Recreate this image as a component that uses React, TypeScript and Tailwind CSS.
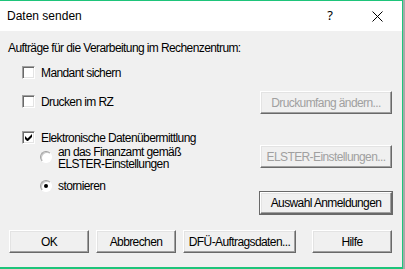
import React from 'react';

const ui = { fontFamily: '"Liberation Sans", Arial, sans-serif' };

function Check({ checked }: { checked?: boolean }) {
  return (
    <span className="relative block w-[13px] h-[13px] shrink-0 bg-white border border-t-[#a0a0a0] border-l-[#a0a0a0] border-b-white border-r-white shadow-[inset_1px_1px_0_#696969,inset_-1px_-1px_0_#e3e3e3]">
      {checked && (
        <svg className="absolute left-[2px] top-[2px]" width="7" height="7" viewBox="0 0 7 7">
          <path d="M0 2v3l2 2h1l4-4V0L2.5 4.5Z" fill="#000" />
        </svg>
      )}
    </span>
  );
}

function Radio({ checked }: { checked?: boolean }) {
  return (
    <span className="relative flex items-center justify-center w-[12px] h-[12px] shrink-0 rounded-full bg-white border border-t-[#a0a0a0] border-l-[#a0a0a0] border-b-white border-r-white shadow-[inset_1px_1px_0_#c8c8c8]">
      {checked && <span className="block w-[4px] h-[4px] rounded-full bg-black" />}
    </span>
  );
}

function Btn({
  children,
  disabled,
  className = '',
}: {
  children: React.ReactNode;
  disabled?: boolean;
  className?: string;
}) {
  return (
    <button
      className={`flex items-center justify-center whitespace-nowrap bg-[#f0f0f0] text-[12px] tracking-[-0.6px] border border-t-white border-l-white border-b-[#696969] border-r-[#696969] shadow-[inset_-1px_-1px_0_#a0a0a0,inset_1px_1px_0_#e3e3e3] ${
        disabled ? 'text-[#a0a0a0]' : 'text-black'
      } ${className}`}
      style={ui}
    >
      {children}
    </button>
  );
}

export default function App() {
  return (
    <div className="w-[405px] h-[269px] bg-[#a9a9a9] overflow-hidden">
      <div className="w-[403px] h-[269px] flex flex-col bg-[#f0f0f0] border-t border-r border-b-2 border-[#1ec47a]">
        {/* Title bar */}
        <div className="h-[30px] shrink-0 bg-white flex items-center pl-[7px] pr-[19px]">
          <span className="text-[12px] text-black" style={ui}>
            Daten senden
          </span>
          <span className="ml-auto mr-[39px] text-[13px] text-black" style={{ fontFamily: '"Noto Sans", sans-serif' }}>
            ?
          </span>
          <svg width="11" height="11" viewBox="0 0 11 11">
            <path d="M0.5 0.5L10.5 10.5M10.5 0.5L0.5 10.5" stroke="#000" strokeWidth="1" />
          </svg>
        </div>

        <div className="flex flex-col pl-[8px] pr-[10px] text-[12px] tracking-[-0.6px] text-black whitespace-nowrap" style={ui}>
          <div className="mt-[11px] h-[13px] leading-[13px]">Aufträge für die Verarbeitung im Rechenzentrum:</div>

          <div className="mt-[11px] h-[13px] flex items-center pl-[14px] gap-[6px]">
            <Check />
            <span>Mandant sichern</span>
          </div>

          <div className="mt-[12px] h-[23px] flex items-center justify-between pl-[14px]">
            <div className="flex items-center gap-[6px] -mt-[2px]">
              <Check />
              <span>Drucken im RZ</span>
            </div>
            <Btn disabled className="w-[132px] h-[23px]">
              Druckumfang ändern...
            </Btn>
          </div>

          <div className="mt-[17px] h-[13px] flex items-center pl-[14px] gap-[6px]">
            <Check checked />
            <span>Elektronische Datenübermittlung</span>
          </div>

          <div className="mt-[1px] h-[23px] flex items-center justify-between pl-[32px]">
            <div className="flex items-center gap-[6px]">
              <Radio />
              <span className="leading-[12px] mt-[2px]">
                an das Finanzamt gemäß
                <br />
                ELSTER-Einstellungen
              </span>
            </div>
            <Btn disabled className="w-[132px] h-[23px]">
              ELSTER-Einstellungen...
            </Btn>
          </div>

          <div className="mt-[12px] h-[12px] flex items-center pl-[32px] gap-[6px]">
            <Radio checked />
            <span>stornieren</span>
          </div>

          <div className="h-[22px] flex justify-end">
            <Btn className="w-[132px] h-[22px] outline outline-1 outline-[#696969]">Auswahl Anmeldungen</Btn>
          </div>

          <div className="mt-[16px] h-[23px] flex items-center">
            <Btn className="ml-[1px] w-[80px] h-[23px]">OK</Btn>
            <Btn className="ml-[7px] w-[80px] h-[23px]">Abbrechen</Btn>
            <Btn className="ml-[7px] w-[113px] h-[23px]">DFÜ-Auftragsdaten...</Btn>
            <Btn className="ml-auto w-[80px] h-[23px]">Hilfe</Btn>
          </div>
        </div>
      </div>
    </div>
  );
}
